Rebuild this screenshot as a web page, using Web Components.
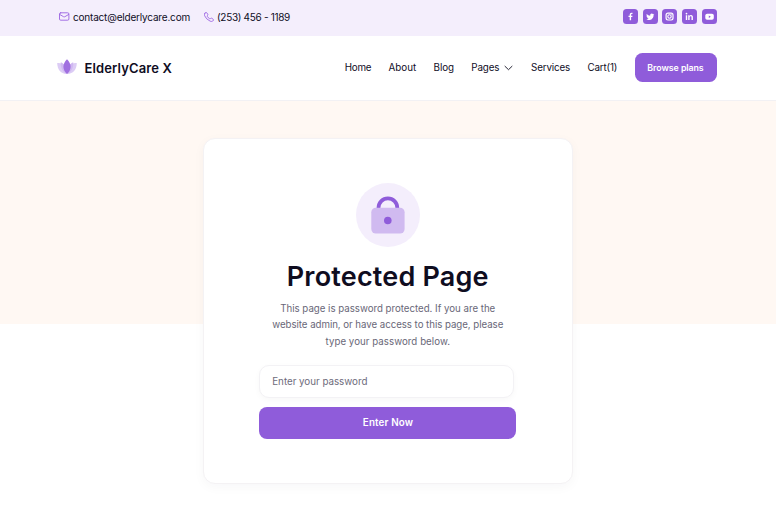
<!DOCTYPE html>
<html lang="en">
<head>
<meta charset="utf-8">
<title>Protected Page</title>
<style>
html, body { margin: 0; height: 100%; background: #fff; overflow: hidden; }
body { font-family: Inter, "Liberation Sans", sans-serif; color: #0f0d1f; -webkit-font-smoothing: antialiased; }
</style>
</head>
<body>
<care-page></care-page>
<script>
function define(name, html, setup) {
  customElements.define(name, class extends HTMLElement {
    constructor() {
      super();
      const t = document.createElement('template');
      t.innerHTML = html;
      this.attachShadow({ mode: 'open' }).append(t.content.cloneNode(true));
    }
    connectedCallback() { if (setup) setup(this, this.shadowRoot); }
  });
}

/* One line of text tracked so that it fills the width given in "w". */
define('fit-text', `
<style>
:host { display: block; white-space: nowrap; flex: none; }
span { display: inline-block; }
</style><span><slot></slot></span>`, (el, root) => {
  const w = parseFloat(el.getAttribute('w'));
  const span = root.querySelector('span');
  el.style.width = w + 'px';
  const natural = span.getBoundingClientRect().width;
  span.style.letterSpacing = ((w - natural) / el.textContent.length).toFixed(4) + 'px';
});

define('social-link', `
<style>
:host { display: block; width: 15px; height: 15px; border-radius: 3.5px; background: #8f5cda; }
svg { display: block; width: 15px; height: 15px; fill: #fff; }
</style><svg viewBox="0 0 15 15"></svg>`, (el, root) => {
  root.querySelector('svg').innerHTML = {
    facebook: '<path d="M6.7 11.2V8.1H5.5V6.7h1.2v-1c0-1.3.7-2 1.9-2h.9v1.3h-.7c-.5 0-.7.3-.7.7v1h1.4l-.2 1.4H8.1v3.1z"/>',
    twitter: '<path d="M11.4 5.1a3 3 0 0 1-.8.8c0 3.3-2.3 5.2-4.8 5.2a4.9 4.9 0 0 1-2.5-.7 3.3 3.3 0 0 0 2.3-.7c-.7 0-1.3-.5-1.5-1.1h.7A1.7 1.7 0 0 1 3.5 7l.7.2a1.7 1.7 0 0 1-.5-2.2 4.7 4.7 0 0 0 3.5 1.8 1.7 1.7 0 0 1 2.9-1.6l1-.4-.7.9z"/>',
    instagram: '<rect x="4.1" y="4.1" width="6.9" height="6.9" rx="1.9" fill="none" stroke="#fff" stroke-width="1.2"/><circle cx="7.5" cy="7.5" r="1.7" fill="none" stroke="#fff" stroke-width="1.1"/><circle cx="9.5" cy="5.5" r=".45"/>',
    linkedin: '<circle cx="4.5" cy="4.6" r=".9"/><path d="M3.8 6.2h1.4v4.9H3.8zM6.2 6.2h1.3v.7c.3-.5.8-.8 1.5-.8 1.5 0 1.9 1 1.9 2.2v2.8H9.5V8.5c0-.7-.1-1.2-.8-1.2s-1.1.5-1.1 1.2v2.6H6.2z"/>',
    youtube: '<rect x="3.3" y="4.7" width="8.5" height="6" rx="1.8"/><path d="M6.8 6.5v2.4l2-1.2z" fill="#8f5cda"/>'
  }[el.getAttribute('kind')];
});

define('top-bar', `
<style>
:host { display: flex; box-sizing: border-box; height: 35.5px; padding: 0 59px 2px; align-items: center; background: #f4eefc; font-size: 10px; line-height: 14px; }
svg { flex: none; fill: none; stroke: #9b63e2; stroke-width: .9; stroke-linecap: round; stroke-linejoin: round; }
.mail { margin-right: 3.5px; }
.phone { margin: 0 3.5px 0 13.5px; }
.social { display: flex; gap: 4.8px; margin-left: auto; }
</style>
<svg class="mail" width="10.5" height="9" viewBox="0 0 10.5 9"><rect x=".5" y=".8" width="9.4" height="7.4" rx="1.2"/><path d="M.8 2.5 4.5 4.7q.7.4 1.4 0l3.7-2.2"/></svg>
<fit-text w="117">contact@elderlycare.com</fit-text>
<svg class="phone" width="10" height="10" viewBox="0 0 10 10"><path d="M1 1.1Q1.5.4 2.2.5q.5 0 .8.6l.8 1.3q.2.6-.3 1.1-.5.4-.2.9.8 1.4 2.3 2.3.5.3.9-.2.5-.5 1.1-.3l1.3.8q.6.4.6.9 0 .6-.7 1.1-1 .8-2.6.2Q2 7.2.6 3.7q-.4-1.4.4-2.6z"/></svg>
<fit-text w="73">(253) 456 - 1189</fit-text>
<div class="social">
<social-link kind="facebook"></social-link><social-link kind="twitter"></social-link><social-link kind="instagram"></social-link><social-link kind="linkedin"></social-link><social-link kind="youtube"></social-link>
</div>`);

define('brand-logo', `
<style>
:host { display: flex; align-items: center; gap: 8px; font-size: 13px; font-weight: 600; line-height: 18px; }
svg { flex: none; margin-top: -2px; }
</style>
<svg width="20" height="16" viewBox="0 0 20 16">
<g fill="#dcccf5"><path d="M.2 4.1C5.5 3.4 9.2 6.6 9.8 14.9 4.2 15.1.4 11.3.2 4.1z"/><path d="M19.8 4.1C14.5 3.4 10.8 6.6 10.2 14.9c5.6.2 9.4-3.6 9.6-10.8z"/></g>
<g fill="#d0b9f1"><path d="M3.8 3.3C8 5 9.6 8.5 9.9 14.9 5.5 13.2 3.2 8.5 3.8 3.3z"/><path d="M16.2 3.3C12 5 10.4 8.5 10.1 14.9c4.4-1.7 6.7-6.4 6.1-11.6z"/></g>
<path d="M10 .3C14.8 5 14.8 10.6 10 15 5.2 10.6 5.2 5 10 .3z" fill="#a06fe0"/>
</svg>
<fit-text w="87.5">ElderlyCare X</fit-text>`);

define('nav-bar', `
<style>
:host { display: flex; box-sizing: border-box; height: 65px; padding: 0 59.5px 0 56.5px; align-items: center; background: #fff; border-bottom: 1px solid #f2f1f4; }
nav { display: flex; align-items: center; gap: 17.3px; margin: 0 0 0 auto; font-size: 9.8px; line-height: 14px; }
.drop { display: flex; align-items: center; gap: 4.5px; margin-right: 1px; }
.drop svg { fill: none; stroke: #0f0d1f; stroke-width: .9; stroke-linecap: round; stroke-linejoin: round; }
.cta { display: flex; align-items: center; justify-content: center; box-sizing: border-box; width: 82px; height: 29px; border-radius: 7.5px; background: #8f5cda; color: #fff; font-size: 8.8px; font-weight: 600; }
</style>
<brand-logo></brand-logo>
<nav>
<fit-text w="26.5">Home</fit-text><fit-text w="27.7">About</fit-text><fit-text w="20.5">Blog</fit-text>
<div class="drop"><fit-text w="28">Pages</fit-text><svg width="9" height="6" viewBox="0 0 9 6"><path d="M1 1.3 4.5 4.7 8 1.3"/></svg></div>
<fit-text w="39">Services</fit-text><fit-text w="29.8">Cart(1)</fit-text>
<div class="cta"><fit-text w="56.3">Browse plans</fit-text></div>
</nav>`);

define('lock-badge', `
<style>:host { display: block; width: 64px; height: 64px; } svg { display: block; }</style>
<svg width="64" height="64" viewBox="0 0 64 64">
<circle cx="32" cy="32" r="32" fill="#f4eefc"/>
<path d="M22.5 26v-1.3a9.4 9.4 0 0 1 18.8 0V26" fill="none" stroke="#8f5cda" stroke-width="3.8"/>
<rect x="15.3" y="24.8" width="33.3" height="25.7" rx="4.5" fill="#d0baf0"/>
<circle cx="31.8" cy="37.5" r="3.8" fill="#8f5cda"/>
</svg>`);

define('password-form', `
<style>
:host { display: block; width: 257.5px; }
input { display: block; box-sizing: border-box; width: 255px; height: 33px; padding: 0 12.5px; border: 1px solid #f3f2f5; border-radius: 10px; outline: 0; background: #fff; box-shadow: 0 2px 6px rgba(20,20,43,.03); color: #696778; font: 9.8px Inter, "Liberation Sans", sans-serif; letter-spacing: -.02px; }
input::placeholder { color: #6d6b7b; opacity: 1; }
button { display: flex; align-items: center; justify-content: center; width: 257.5px; height: 32.5px; margin: 8.3px 0 0; padding: 0; border: 0; border-radius: 8px; background: #8f5cda; color: #fff; font: 600 9.8px Inter, "Liberation Sans", sans-serif; }
button fit-text { margin-left: 1px; }
</style>
<input type="text" placeholder="Enter your password" aria-label="Password">
<button type="button"><fit-text w="50.3">Enter Now</fit-text></button>`);

define('protected-card', `
<style>
:host { display: flex; flex-direction: column; align-items: center; box-sizing: border-box; width: 370.5px; height: 346px; padding-top: 44px; border: 1px solid #f4f2f4; border-radius: 12px; background: #fff; box-shadow: 0 3px 12px rgba(20,20,43,.035); }
h1 { margin: 12.5px 0 0; font-size: 27px; font-weight: 600; line-height: 34px; }
.copy { display: flex; flex-direction: column; align-items: center; margin-top: 7.7px; font-size: 9.7px; line-height: 16.2px; color: #696778; }
password-form { margin: 15.6px 0 0 -.5px; }
</style>
<lock-badge></lock-badge>
<h1><fit-text w="202">Protected Page</fit-text></h1>
<div class="copy">
<fit-text w="215">This page is password protected. If you are the</fit-text>
<fit-text w="231">website admin, or have access to this page, please</fit-text>
<fit-text w="124.5">type your password below.</fit-text>
</div>
<password-form></password-form>`);

define('care-page', `
<style>
:host { display: block; height: 532px; }
main { display: flex; justify-content: center; box-sizing: border-box; height: 431px; padding: 37.5px .5px 0 0; background: linear-gradient(#fff8f3 223px, #fff 223px); }
</style>
<top-bar></top-bar>
<nav-bar></nav-bar>
<main><protected-card></protected-card></main>`);
</script>
</body>
</html>
